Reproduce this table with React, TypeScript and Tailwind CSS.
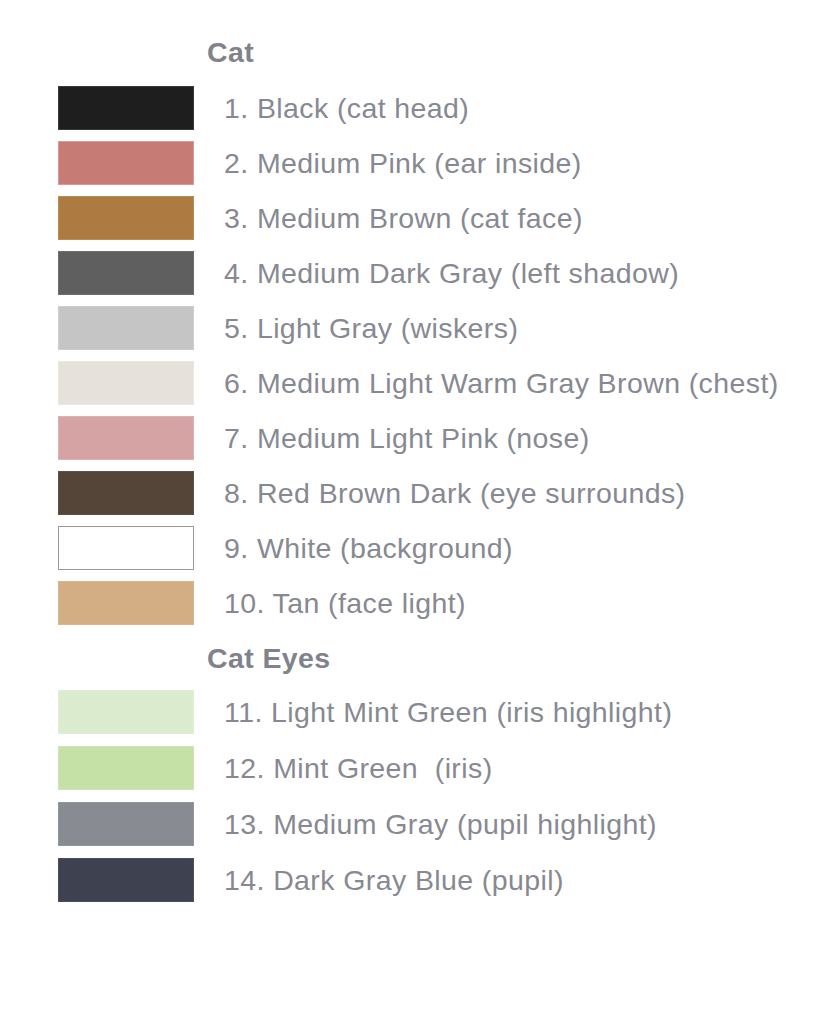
import React from "react";

type Item = { label: string; cls: string };

const cat: Item[] = [
  { label: "1. Black (cat head)", cls: "bg-[#1e1e1e] border-[#3a3a3a]" },
  { label: "2. Medium Pink (ear inside)", cls: "bg-[#c67c74] border-[#d49a94]" },
  { label: "3. Medium Brown (cat face)", cls: "bg-[#ad7b41] border-[#b98b57]" },
  { label: "4. Medium Dark Gray (left shadow)", cls: "bg-[#5f5f5f] border-[#6e6e6e]" },
  { label: "5. Light Gray (wiskers)", cls: "bg-[#c6c5c6] border-[#cfcecf]" },
  { label: "6. Medium Light Warm Gray Brown (chest)", cls: "bg-[#e6e2db] border-[#ebe8e2]" },
  { label: "7. Medium Light Pink (nose)", cls: "bg-[#d5a3a3] border-[#dcb2b2]" },
  { label: "8. Red Brown Dark (eye surrounds)", cls: "bg-[#554538] border-[#5e5044]" },
  { label: "9. White (background)", cls: "bg-white border-[#9a9a9a]" },
  { label: "10. Tan (face light)", cls: "bg-[#d3ae84] border-[#d9b68e]" },
];

const eyes: Item[] = [
  { label: "11. Light Mint Green (iris highlight)", cls: "bg-[#dbebcd] border-[#e0eed3]" },
  { label: "12. Mint Green  (iris)", cls: "bg-[#c6e1a6] border-[#cde5b1]" },
  { label: "13. Medium Gray (pupil highlight)", cls: "bg-[#898b93] border-[#94969d]" },
  { label: "14. Dark Gray Blue (pupil)", cls: "bg-[#3e4150] border-[#4a4d5b]" },
];

function Row({ item, mb }: { item: Item; mb: string }) {
  return (
    <div className={`flex items-center h-[44px] ${mb}`}>
      <div className={`w-[136px] h-[44px] border ${item.cls}`} />
      <div className="ml-[30px] text-[28.5px] leading-none tracking-[0.4px] text-[#878992] whitespace-pre">
        {item.label}
      </div>
    </div>
  );
}

export default function App() {
  return (
    <div
      className="w-[816px] h-[1024px] bg-white pl-[58px] pt-[30px]"
      style={{ fontFamily: '"Liberation Sans", Arial, sans-serif' }}
    >
      <div className="flex items-center h-[44px] mb-[12px] pl-[149px] text-[28.5px] leading-none tracking-[0.4px] font-bold text-[#80838b]">
        Cat
      </div>
      {cat.map((it) => (
        <Row key={it.label} item={it} mb="mb-[11px]" />
      ))}
      <div className="flex items-center h-[44px] mb-[10px] pl-[149px] text-[28.5px] leading-none tracking-[0.4px] font-bold text-[#80838b]">
        Cat Eyes
      </div>
      {eyes.map((it) => (
        <Row key={it.label} item={it} mb="mb-[12px]" />
      ))}
    </div>
  );
}
